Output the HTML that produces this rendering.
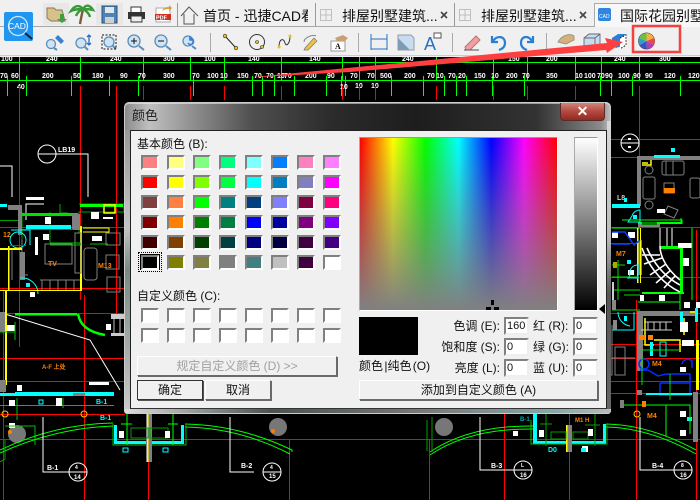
<!DOCTYPE html>
<html><head><meta charset="utf-8"><style>
html,body{margin:0;padding:0;background:#000;}
#p{position:relative;width:700px;height:500px;overflow:hidden;background:#000;font-family:"Liberation Sans","WenQuanYi Zen Hei","Noto Sans CJK SC",sans-serif;}
#p>*{position:absolute;}
.t{white-space:nowrap;font-size:14px;color:#111;line-height:16px;}
.l{white-space:nowrap;font-size:12px;color:#111;line-height:14px;}
.s{position:absolute;width:14px;height:11px;border:2px solid;border-color:#808080 #fff #fff #808080;box-sizing:content-box;}
.b{box-sizing:border-box;background:#f0f0f0;border:1px solid;border-color:#fff #696969 #696969 #fff;box-shadow:1px 1px 0 #696969;text-align:center;font-size:12px;line-height:18px;color:#111;white-space:nowrap;}
.i{box-sizing:border-box;background:#fff;border:2px solid;border-color:#808080 #eee #eee #808080;font-size:11px;line-height:14px;height:18px;width:25px;color:#111;padding-left:1px;}
</style></head><body><div id="p">

<svg style="left:0;top:0" width="700" height="500" viewBox="0 0 700 500" font-family="Liberation Sans,sans-serif" font-weight="bold" font-size="7" fill="#fff">
<rect width="700" height="500" fill="#000"/>
<!-- ruler -->
<g stroke="#00ff00" stroke-width="1" fill="none">
<path d="M0 62.5H700M0 80.5H700"/>
<path d="M19.5 57V80M80.5 57V80M143.5 57V80M190.5 57V80M224.5 57V80M281.5 57V80M342.5 57V80M359.5 57V80M375.5 57V80M436.5 57V80M493.5 57V80M527.5 57V80M575.5 57V80M601.5 57V80M639.5 57V80"/>
<path d="M7.5 76V96M26.5 76V96M71.5 76V96M109.5 76V96M138.5 76V96M193.5 76V96M252.5 76V96M262.5 76V96M274.5 76V96M294.5 76V96M326.5 76V96M341.5 76V96M345.5 76V96M391.5 76V96M423.5 76V96M444.5 76V96M456.5 76V96M466.5 76V96M492.5 76V96M524.5 76V96M600.5 76V96M611.5 76V96M632.5 76V96M680.5 76V96"/>
</g>
<g>
<text x="1" y="61">100</text><text x="46" y="61">240</text><text x="110" y="61">240</text><text x="163" y="61">300</text><text x="204" y="61">100</text><text x="248" y="61">140</text><text x="309" y="61">140</text><text x="402" y="61">240</text><text x="508" y="61">150</text><text x="546" y="61">200</text><text x="614" y="61">240</text><text x="659" y="61">300</text>
<text x="0" y="78">70</text><text x="11" y="78">60</text><text x="42" y="78">200</text><text x="73" y="78">50</text><text x="92" y="78">180</text><text x="120" y="78">90</text><text x="138" y="78">70</text><text x="163" y="78">300</text><text x="192" y="78">70</text><text x="207" y="78">100</text><text x="220" y="78">10</text><text x="237" y="78">150</text><text x="254" y="78">70</text><text x="266" y="78">70</text><text x="277" y="78">10</text><text x="284" y="78">70</text><text x="305" y="78">200</text><text x="327" y="78">90</text><text x="350" y="78">70</text><text x="367" y="78">70</text><text x="380" y="78">500</text><text x="404" y="78">200</text><text x="427" y="78">70</text><text x="436" y="78">10</text><text x="448" y="78">70</text><text x="458" y="78">20</text><text x="474" y="78">150</text><text x="491" y="78">10</text><text x="506" y="78">200</text><text x="522" y="78">70</text><text x="546" y="78">350</text><text x="575" y="78">10</text><text x="584" y="78">100</text><text x="597" y="78">70</text><text x="605" y="78">90</text><text x="618" y="78">100</text><text x="633" y="78">90</text><text x="645" y="78">90</text><text x="664" y="78">120</text><text x="688" y="78">120</text>
<text x="17" y="89">40</text><text x="340" y="89">10</text><text x="355" y="88">10</text><text x="371" y="88">10</text>
</g>

<!-- red lines -->
<g stroke="#ff0000" stroke-width="1" fill="none">
<path d="M19.5 86V347M80.5 86V300M116.5 86V313M143.5 86V100M190.5 86V100M224.5 86V100M281.5 86V100M342.5 86V100M359.5 86V100M375.5 86V100M436.5 86V100M493.5 86V100M527.5 86V100M575.5 86V100M639.5 86V206"/>
<path d="M3.5 290V500M84.5 295V500M148.5 414V500M289.5 439V500M429.5 439V500M504.5 414V500M569.5 414V500M636.5 300V500M696.5 230V500"/>
<path d="M0 227.5H125M0 288.5H125M0 313.5H125M0 358.5H125M0 381.5H125M0 414.5H125M0 439.5H700M611 139.5H700M611 157.5H660M611 227.5H700M611 243.5H640M611 277.5H700M611 313.5H700M611 344.5H700M611 358.5H700M611 381.5H700M611 393.5H700"/>
</g>

<!-- left plan -->
<circle cx="47" cy="154" r="9" fill="none" stroke="#fff"/><path d="M38 154H88V197M0 166H12V197" stroke="#fff" fill="none"/>
<path d="M26 220V204H44" stroke="#fff" fill="none"/>
<text x="58" y="152" font-size="7">LB19</text>
<rect x="26" y="197" width="18" height="3"/>
<path d="M60 204V213H68" stroke="#0a0" fill="none" stroke-width="1"/>
<path d="M79 204H124V212H79V233M50 212V243M22 212V245" stroke="#00a000" fill="none"/>
<rect x="22" y="213" width="56" height="3" fill="#00e000"/><rect x="80" y="204" width="43" height="3" fill="#00ff00"/>
<rect x="8" y="205" width="14" height="5" fill="#808080"/><rect x="18" y="205" width="4" height="30" fill="#808080"/><rect x="72" y="214" width="8" height="16" fill="#808080"/>
<rect x="0" y="204" width="7" height="3" fill="#00ffff"/>
<rect x="26" y="225" width="45" height="5" fill="#00ffff"/><rect x="0" y="220" width="18" height="1" fill="#00a000"/>
<rect x="23" y="229" width="50" height="1" fill="#f00"/><path d="M0 227.5H18" stroke="#f00"/>
<path d="M83 228H109V232H83" stroke="#ffff00" fill="none"/><rect x="80" y="226" width="2" height="65" fill="#ffff00"/>
<rect x="104" y="205" width="11" height="8" fill="none" stroke="#ffff00" stroke-width="1.5"/>
<rect x="45" y="217" width="6" height="7"/><rect x="91" y="212" width="8" height="7"/><rect x="103" y="217" width="10" height="2"/><rect x="43" y="234" width="6" height="6"/><rect x="92" y="236" width="10" height="5"/>
<rect x="35" y="237" width="3" height="18"/>
<g stroke="#808080" fill="none" stroke-width="1"><rect x="45" y="244" width="27" height="20"/><rect x="75" y="233" width="6" height="40"/><rect x="84" y="248" width="13" height="32" rx="3"/><rect x="106" y="233" width="14" height="12"/><rect x="106" y="255" width="13" height="14"/><rect x="107" y="277" width="13" height="15"/><path d="M40 280H80M42 280V290M50 280V290M58 280V290M66 280V290M74 280V290M22 240V275H28M12 250V280"/></g>
<path d="M50 243H80V245H50M90 244H108" stroke="#00c000" fill="none"/>
<text x="48" y="266" fill="#ff8000">TV</text><text x="98" y="268" fill="#ff8000">M13</text><text x="3" y="237" fill="#ff8000">12</text>
<circle cx="18" cy="240" r="8" fill="none" stroke="#00ffff"/><path d="M11 230H30V245" stroke="#00ffff" fill="none"/>
<rect x="0" y="248" width="22" height="2" fill="#ffff00"/><rect x="10" y="245" width="16" height="1" fill="#f00"/><rect x="8" y="246" width="1.5" height="45" fill="#ffff00"/><rect x="20" y="252" width="5" height="28" fill="#808080"/>
<path d="M20 278a16 16 0 0 1 18 16" stroke="#00ffff" fill="none"/><rect x="26" y="283" width="4" height="4" fill="#0ff"/>
<rect x="0" y="290" width="40" height="1" fill="#ff0"/><rect x="37" y="290" width="45" height="1" fill="#ff0"/><rect x="30" y="292" width="5" height="5"/>
<!-- left lower -->
<rect x="15" y="313" width="62" height="2.5" fill="#00ff00"/>
<path d="M78 314C80 325 88 332 105 335" stroke="#00ff00" stroke-width="2.5" fill="none"/>
<path d="M5 314L90 340L120 390" stroke="#fff" fill="none"/>
<rect x="111" y="314" width="13" height="5" fill="#ccc"/><rect x="111" y="333" width="13" height="3" fill="#ccc"/><path d="M114 319V333M120 319V333" stroke="#bbb"/>
<rect x="106" y="324" width="5" height="6"/>
<rect x="0" y="312" width="5" height="20" fill="#808080"/><rect x="5" y="290" width="2" height="95" fill="#ffff00"/>
<rect x="7" y="325" width="8" height="6"/><path d="M0 332H15V340M15 322V332" stroke="#00c000" fill="none"/>
<rect x="0" y="380" width="6" height="12" fill="#808080"/>
<rect x="15" y="392" width="99" height="4" fill="#00ffff"/><rect x="0" y="393" width="15" height="3" fill="#00ffff"/><rect x="73" y="393" width="12" height="3" fill="#808080"/>
<rect x="89" y="382" width="20" height="3" fill="#fff"/>
<rect x="17" y="385" width="5" height="6"/>
<path d="M0 405.5H114M17 398V420M63 398V408" stroke="#00c000" fill="none"/>
<rect x="9" y="400" width="6" height="6"/><rect x="39" y="400" width="4" height="4" fill="none" stroke="#0ff"/><rect x="56" y="398" width="6" height="8"/>
<text x="96" y="404" fill="#00ffff">B-1</text><text x="100" y="420" fill="#00ffff">B-1</text>
<text x="42" y="369" fill="#ff8000" font-size="6">A-F 上处</text>
<circle cx="5" cy="414" r="3" fill="none" stroke="#ffcc00"/><circle cx="84" cy="414" r="3" fill="none" stroke="#ffcc00"/>
<g fill="#777"><circle cx="17" cy="434" r="9"/><circle cx="278" cy="427" r="9"/><circle cx="444" cy="427" r="9"/></g>
<circle cx="10" cy="432" r="2" fill="#ff8000"/><circle cx="273" cy="431" r="2" fill="#ff8000"/>
<rect x="9" y="423" width="6" height="5"/>
<path d="M5 426H35V445" stroke="#00c000" fill="none"/>
<!-- arcs -->
<g stroke="#00ff00" fill="none">
<path d="M0 453Q55 428 113 426M0 450Q55 424 113 423"/>
<path d="M185 424Q240 425 292 450L292 452M185 427Q240 428 290 454"/>
<path d="M430 452Q470 425 535 426M430 455Q470 428 535 429"/>
<path d="M606 424Q650 425 696 450M606 427Q650 428 696 454"/>
</g>
<path d="M0 462L5 459V440M427 451V420M432 452V417" stroke="#00a000" fill="none"/>
<path d="M113 424V445H186V425" stroke="#00c000" fill="none"/>
<rect x="114" y="425" width="3" height="18" fill="#00ffff"/><rect x="181" y="425" width="3" height="18" fill="#00ffff"/><rect x="114" y="441" width="70" height="3" fill="#00ffff"/>
<rect x="146" y="414" width="6" height="48" fill="#808080"/><rect x="147" y="414" width="1.5" height="48" fill="#ff0"/>
<path d="M131 428H148V438H131ZM150 428H168V438H150Z" stroke="#00a000" fill="none"/>
<path d="M127 414V445M173 414V445M121 424H132M168 424H178" stroke="#00ff00" fill="none"/>
<rect x="119" y="431" width="5" height="7"/><rect x="165" y="431" width="5" height="7"/>
<rect x="123" y="448" width="5" height="4" fill="none" stroke="#0ff"/><rect x="163" y="448" width="5" height="4" fill="none" stroke="#0ff"/>
<!-- bottom -->
<g stroke="#fff" fill="none"><path d="M43 417V472H70"/><circle cx="78" cy="472" r="9"/><path d="M69 472H87"/>
<path d="M230 417V472H254"/><circle cx="272" cy="472" r="9"/><path d="M263 472H281"/>
<path d="M480 417V470H514"/><circle cx="523" cy="470" r="9"/><path d="M514 470H532"/>
<path d="M640 417V470H675"/><circle cx="683" cy="470" r="9"/><path d="M674 470H692"/></g>
<text x="47" y="470">B-1</text><text x="241" y="468">B-2</text><text x="491" y="468">B-3</text><text x="652" y="468">B-4</text>
<text x="75" y="469" font-size="5">4</text><text x="74" y="479" font-size="6">14</text><text x="270" y="469" font-size="5">4</text><text x="269" y="478" font-size="6">15</text><text x="521" y="467" font-size="5">L</text><text x="520" y="477" font-size="6">16</text><text x="681" y="467" font-size="5">8</text><text x="680" y="477" font-size="6">16</text>
<!-- center bottom right -->
<rect x="533" y="414" width="4" height="27" fill="#00ffff"/><rect x="603" y="424" width="3" height="17" fill="#00ffff"/><rect x="533" y="441" width="73" height="3" fill="#00ffff"/>
<path d="M531 420V444H607V424" stroke="#00c000" fill="none"/>
<rect x="566" y="425" width="6" height="27" fill="#808080"/><rect x="566" y="425" width="1.5" height="27" fill="#ff0"/>
<path d="M551 432H566V439H551ZM573 432H588V439H573ZM546 414V446M595 414V446M540 424H552M585 425H600" stroke="#00a000" fill="none"/>
<rect x="539" y="430" width="5" height="7"/><rect x="588" y="429" width="5" height="7"/><rect x="513" y="431" width="5" height="5"/><rect x="582" y="446" width="6" height="6"/>
<text x="548" y="452" fill="#0ff">D0</text><rect x="581" y="448" width="5" height="4" fill="#0ff"/>
<text x="575" y="422" fill="#ff8000" font-size="6">M1 H</text><text x="520" y="421" fill="#0aa" font-size="6">B-1</text>
<!-- right side lower -->
<text x="647" y="418" fill="#ff8000">M4</text><circle cx="637" cy="414" r="3" fill="none" stroke="#ffcc00"/>
<rect x="680" y="411" width="6" height="6"/><rect x="680" y="430" width="6" height="6"/><rect x="687" y="417" width="5" height="4" fill="#0ff"/>
<path d="M624 405H690V434M666 405V436" stroke="#00ff00" fill="none"/>
<rect x="642" y="401" width="4" height="6" fill="#ff8000"/><rect x="620" y="400" width="4" height="8" fill="#808080"/><rect x="693" y="392" width="5" height="50" fill="#808080"/>
<!-- right plan -->
<circle cx="630" cy="143" r="9" fill="none" stroke="#fff"/><path d="M621 143H639" stroke="#fff"/><rect x="628" y="138" width="3" height="2"/><rect x="628" y="146" width="3" height="2"/>
<rect x="654" y="155" width="26" height="3" fill="#00ffff"/><rect x="640" y="156" width="60" height="4" fill="#808080"/><rect x="654" y="155" width="26" height="3" fill="#00ffff"/>
<rect x="671" y="148" width="4" height="4" fill="#00ffff"/>
<rect x="637" y="156" width="4" height="50" fill="#808080"/>
<path d="M642 165H651V160M642 163H648" stroke="#ffff00" fill="none" stroke-width="1.5"/>
<g stroke="#808080" fill="none"><circle cx="649" cy="170" r="4"/><rect x="643" y="177" width="12" height="22" rx="2"/><circle cx="649" cy="205" r="4"/><rect x="662" y="161" width="22" height="14" rx="2"/><path d="M666 161V175M673 161V175"/><rect x="664" y="183" width="10" height="10"/><path d="M668 206L678 210L674 218L664 214Z"/><rect x="690" y="178" width="10" height="20" rx="2"/></g>
<rect x="664" y="188" width="11" height="5" fill="#ff8000"/>
<rect x="657" y="209" width="8" height="4"/><text x="617" y="200" fill="#ccc" font-size="7">L8</text><rect x="624" y="198" width="3" height="4" fill="#0ff"/>
<rect x="612" y="204" width="28" height="4" fill="#00ffff"/>
<rect x="638" y="222" width="44" height="2" fill="#00ff00"/><rect x="638" y="224" width="22" height="3" fill="#808080"/><path d="M612 228H640M622 220H682V224M681 218V224" stroke="#00ff00" fill="none"/>
<rect x="642" y="222" width="15" height="3" fill="#008000"/>
<path d="M632 216a8 8 0 0 1 8 -6V222H628Z" fill="none" stroke="#0ff"/><rect x="633" y="215" width="4" height="4" fill="#0ff"/>
<rect x="612" y="232" width="6" height="6"/><rect x="628" y="232" width="7" height="6"/>
<rect x="638" y="240" width="4" height="35" fill="#808080"/><rect x="637" y="228" width="1.5" height="55" fill="#ff0"/><rect x="640" y="228" width="1" height="55" fill="#ff0"/>
<rect x="661" y="246" width="22" height="3" fill="#00ff00"/><rect x="680" y="246" width="3" height="46" fill="#00ff00"/><rect x="642" y="292" width="42" height="2" fill="#00ff00"/>
<path d="M642 248C650 270 665 285 680 292M647 248C655 266 667 278 680 285M660 246C660 258 668 270 680 280M642 255H660M644 264L662 258M650 275L666 264M656 283L671 270M664 288L675 276" stroke="#fff" fill="none" stroke-width="1.6"/>
<path d="M660 228V246M667 228V246M672 228V246" stroke="#fff" fill="none"/>
<rect x="678" y="243" width="14" height="5"/><rect x="683" y="258" width="6" height="8"/><rect x="640" y="295" width="4" height="6"/><rect x="659" y="295" width="6" height="6"/><rect x="684" y="302" width="6" height="6"/><rect x="696" y="302" width="4" height="6"/><rect x="628" y="270" width="6" height="5"/>
<path d="M638 302H680V310M692 228V300M680 294V302" stroke="#00ff00" fill="none"/>
<path d="M612 232H625L634 245L640 240M612 244H630" stroke="#0040ff" fill="none" stroke-width="1.5"/>
<text x="616" y="256" fill="#ff8000">M7</text>
<path d="M630 275a8 8 0 0 1 8 -10V278H628Z" fill="none" stroke="#0ff"/><rect x="627" y="260" width="4" height="4" fill="#0ff"/>
<path d="M612 265H625M612 277H638M612 290H640M618 260V300M624 295H640M612 310H640" stroke="#00e000" fill="none"/>
<rect x="612" y="282" width="2" height="20" fill="#ccc"/><rect x="613" y="262" width="4" height="6" fill="#aa0"/><rect x="612" y="300" width="4" height="10" fill="#888"/>
<rect x="637" y="311" width="6" height="60" fill="#808080"/><rect x="637" y="311" width="60" height="5" fill="#808080"/>
<path d="M645 318V345H654M654 340H680V352M684 318V335M690 312H697" stroke="#ffff00" fill="none" stroke-width="1.5"/>
<path d="M644 322H672M648 322V330M654 322V330M660 322V330M666 322V330M641 330H672" stroke="#ccc" fill="none"/>
<path d="M634 312V330H612M618 312a14 14 0 0 0 12 14" fill="none" stroke="#0ff"/><rect x="624" y="316" width="3" height="5" fill="#0ff"/>
<rect x="613" y="320" width="4" height="10" fill="#888"/>
<rect x="639" y="335" width="6" height="5" fill="#ff8000"/><rect x="648" y="335" width="5" height="5" fill="#ff8000"/>
<path d="M612 325V375H600M615 347H625V375H615ZM612 358H635" stroke="#808080" fill="none"/>
<rect x="680" y="312" width="3" height="12" fill="#0ff"/><rect x="695" y="308" width="3" height="14" fill="#0ff"/>
<rect x="650" y="342" width="3" height="14" fill="#0ff"/><rect x="660" y="342" width="6" height="14" fill="none" stroke="#0ff"/>
<rect x="682" y="340" width="12" height="6"/><rect x="680" y="322" width="8" height="10"/>
<circle cx="644" cy="364" r="5" fill="none" stroke="#0030ff" stroke-width="1.5"/>
<path d="M640 370H648L658 376L666 374H690V395H660V383M660 383H690M682 364a6 6 0 0 1 10 -3V368" stroke="#0030ff" fill="none" stroke-width="1.5"/>
<text x="652" y="366" fill="#ff8000">M4</text>
<rect x="680" y="367" width="6" height="5"/>
<rect x="637" y="390" width="5" height="5" fill="#808080"/><rect x="646" y="393" width="46" height="2" fill="#0ff"/>
<path d="M642 350H680M642 355V385M670 374V400" stroke="#0d0" fill="none"/>
<rect x="696" y="340" width="3" height="50" fill="#ff0"/>
</svg>

<!-- dialog frame -->
<div style="left:124px;top:102px;width:487px;height:312px;box-sizing:border-box;border:1px solid #ccc;border-radius:5px 5px 3px 3px;background:linear-gradient(90deg,#8c8c8c 0,#c0c0c0 5%,#8f8f8f 14%,#505050 26%,#2c2c2c 42%,#1d1d1d 60%,#333 85%,#8a8a8a 98%,#bbb 100%);box-shadow:inset 0 1px 0 rgba(255,255,255,.5);"></div>
<div style="left:125px;top:130px;width:5px;height:279px;background:linear-gradient(#999,#c4c4c4 35%,#7a8a80 50%,#c8c8c8 100%);"></div>
<div style="left:607px;top:121px;width:4px;height:288px;background:linear-gradient(#d9d9d9,#bbb 40%,#555 60%,#666 100%);"></div>
<div style="left:125px;top:409px;width:485px;height:4px;background:linear-gradient(90deg,#ddd,#4a5550 30%,#777 60%,#8aa 90%,#bbb);"></div>
<div class="t" style="left:132px;top:108px;color:#222;font-size:13px;">颜色</div>
<div style="left:560px;top:103px;width:45px;height:18px;box-sizing:border-box;border:1px solid #5a2a2a;border-top:0;border-radius:0 0 4px 4px;background:linear-gradient(#d0867a,#b5483e 50%,#8e2b22);color:#fff;font:bold 14px/16px 'Liberation Sans',sans-serif;text-align:center;">✕</div>

<!-- client -->
<div style="left:130px;top:130px;width:477px;height:279px;box-sizing:border-box;background:#f0f0f0;border:1px solid #222;border-bottom:1px solid #333;"></div>

<div class="l" style="left:137px;top:137px;">基本颜色 (B):</div>

<!-- swatches -->
<div style="left:0;top:0;width:0;height:0;">
<div class="s" style="left:141px;top:155px;background:#ff8080"></div><div class="s" style="left:167px;top:155px;background:#ffff80"></div><div class="s" style="left:193px;top:155px;background:#80ff80"></div><div class="s" style="left:219px;top:155px;background:#00ff80"></div><div class="s" style="left:245px;top:155px;background:#80ffff"></div><div class="s" style="left:271px;top:155px;background:#0080ff"></div><div class="s" style="left:297px;top:155px;background:#ff80c0"></div><div class="s" style="left:323px;top:155px;background:#ff80ff"></div>
<div class="s" style="left:141px;top:175px;background:#ff0000"></div><div class="s" style="left:167px;top:175px;background:#ffff00"></div><div class="s" style="left:193px;top:175px;background:#80ff00"></div><div class="s" style="left:219px;top:175px;background:#00ff40"></div><div class="s" style="left:245px;top:175px;background:#00ffff"></div><div class="s" style="left:271px;top:175px;background:#0080c0"></div><div class="s" style="left:297px;top:175px;background:#8080c0"></div><div class="s" style="left:323px;top:175px;background:#ff00ff"></div>
<div class="s" style="left:141px;top:195px;background:#804040"></div><div class="s" style="left:167px;top:195px;background:#ff8040"></div><div class="s" style="left:193px;top:195px;background:#00ff00"></div><div class="s" style="left:219px;top:195px;background:#008080"></div><div class="s" style="left:245px;top:195px;background:#004080"></div><div class="s" style="left:271px;top:195px;background:#8080ff"></div><div class="s" style="left:297px;top:195px;background:#800040"></div><div class="s" style="left:323px;top:195px;background:#ff0080"></div>
<div class="s" style="left:141px;top:215px;background:#800000"></div><div class="s" style="left:167px;top:215px;background:#ff8000"></div><div class="s" style="left:193px;top:215px;background:#008000"></div><div class="s" style="left:219px;top:215px;background:#008040"></div><div class="s" style="left:245px;top:215px;background:#0000ff"></div><div class="s" style="left:271px;top:215px;background:#0000a0"></div><div class="s" style="left:297px;top:215px;background:#800080"></div><div class="s" style="left:323px;top:215px;background:#8000ff"></div>
<div class="s" style="left:141px;top:235px;background:#400000"></div><div class="s" style="left:167px;top:235px;background:#804000"></div><div class="s" style="left:193px;top:235px;background:#004000"></div><div class="s" style="left:219px;top:235px;background:#004040"></div><div class="s" style="left:245px;top:235px;background:#000080"></div><div class="s" style="left:271px;top:235px;background:#000040"></div><div class="s" style="left:297px;top:235px;background:#400040"></div><div class="s" style="left:323px;top:235px;background:#400080"></div>
<div style="position:absolute;left:138px;top:252px;width:24px;height:20px;box-sizing:border-box;border:1px dotted #000;"></div><div style="position:absolute;left:140px;top:254px;width:20px;height:16px;box-sizing:border-box;border:1px solid #000;"></div>
<div class="s" style="left:141px;top:255px;background:#000"></div><div class="s" style="left:167px;top:255px;background:#808000"></div><div class="s" style="left:193px;top:255px;background:#808040"></div><div class="s" style="left:219px;top:255px;background:#808080"></div><div class="s" style="left:245px;top:255px;background:#408080"></div><div class="s" style="left:271px;top:255px;background:#c0c0c0"></div><div class="s" style="left:297px;top:255px;background:#400040"></div><div class="s" style="left:323px;top:255px;background:#ffffff"></div>
<div class="s" style="left:141px;top:308px;background:#fff"></div><div class="s" style="left:167px;top:308px;background:#fff"></div><div class="s" style="left:193px;top:308px;background:#fff"></div><div class="s" style="left:219px;top:308px;background:#fff"></div><div class="s" style="left:245px;top:308px;background:#fff"></div><div class="s" style="left:271px;top:308px;background:#fff"></div><div class="s" style="left:297px;top:308px;background:#fff"></div><div class="s" style="left:323px;top:308px;background:#fff"></div>
<div class="s" style="left:141px;top:328px;background:#fff"></div><div class="s" style="left:167px;top:328px;background:#fff"></div><div class="s" style="left:193px;top:328px;background:#fff"></div><div class="s" style="left:219px;top:328px;background:#fff"></div><div class="s" style="left:245px;top:328px;background:#fff"></div><div class="s" style="left:271px;top:328px;background:#fff"></div><div class="s" style="left:297px;top:328px;background:#fff"></div><div class="s" style="left:323px;top:328px;background:#fff"></div>
</div>

<div class="l" style="left:137px;top:289px;">自定义颜色 (C):</div>
<div class="b" style="left:137px;top:356px;width:200px;height:20px;color:#a0a0a0;">规定自定义颜色 (D) &gt;&gt;</div>
<div class="b" style="left:137px;top:380px;width:66px;height:20px;border:1px solid #333;box-shadow:1px 1px 0 #555;">确定</div>
<div class="b" style="left:205px;top:380px;width:66px;height:20px;">取消</div>

<!-- spectrum -->
<div style="left:359px;top:137px;width:199px;height:174px;box-sizing:border-box;border:1px solid;border-color:#999 #fff #fff #aaa;background:linear-gradient(rgba(128,128,128,0),#808080),linear-gradient(90deg,#f00,#ff0 16.7%,#0f0 33.3%,#0ff 50%,#00f 66.7%,#f0f 83.3%,#f00);"></div>
<div style="left:574px;top:137px;width:24px;height:174px;box-sizing:border-box;border:1px solid;border-color:#999 #fff #fff #aaa;background:linear-gradient(#fff,#000);"></div>
<svg style="left:480px;top:296px" width="130" height="20"><path d="M119 13L125 8V18Z" fill="#000"/><rect x="11" y="4" width="3" height="5" fill="#000"/><rect x="6" y="11" width="5" height="3" fill="#000"/><rect x="14" y="11" width="5" height="3" fill="#000"/></svg>
<div style="left:359px;top:317px;width:59px;height:38px;background:#000;"></div>
<div class="l" style="left:359px;top:359px;word-spacing:-2px;">颜色 |纯色 (O)</div>

<div class="l" style="left:430px;top:319px;width:70px;text-align:right;">色调 (E):</div>
<div class="l" style="left:430px;top:340px;width:70px;text-align:right;">饱和度 (S):</div>
<div class="l" style="left:430px;top:361px;width:70px;text-align:right;">亮度 (L):</div>
<div class="l" style="left:533px;top:319px;">红 (R):</div>
<div class="l" style="left:533px;top:340px;">绿 (G):</div>
<div class="l" style="left:533px;top:361px;">蓝 (U):</div>
<div class="i" style="left:504px;top:317px;">160</div><div class="i" style="left:504px;top:338px;">0</div><div class="i" style="left:504px;top:359px;">0</div>
<div class="i" style="left:573px;top:317px;">0</div><div class="i" style="left:573px;top:338px;">0</div><div class="i" style="left:573px;top:359px;">0</div>
<div class="b" style="left:359px;top:380px;width:239px;height:20px;">添加到自定义颜色 (A)</div>

<!-- app header -->
<div style="left:0;top:0;width:700px;height:57px;background:#f0f0f0;"></div>
<div style="left:0;top:26px;width:594px;height:1px;background:#a8a8a8;"></div>
<div style="left:594px;top:3px;width:106px;height:24px;background:#f7f7f7;border-left:1px solid #aaa;border-top:1px solid #aaa;box-sizing:border-box;"></div>
<div style="left:0;top:55px;width:700px;height:1px;background:#ccc;"></div>
<div style="left:43px;top:3px;width:26px;height:22px;background:#e7e7e7;"></div><div style="left:96px;top:3px;width:27px;height:22px;background:#e7e7e7;"></div>
<div style="left:177px;top:3px;width:1px;height:23px;background:#999;"></div>
<div style="left:315px;top:3px;width:1px;height:23px;background:#999;"></div>
<div style="left:454px;top:3px;width:1px;height:23px;background:#999;"></div>
<div style="left:210px;top:33px;width:1px;height:19px;background:#aaa;"></div><div style="left:358px;top:33px;width:1px;height:19px;background:#aaa;"></div><div style="left:452px;top:33px;width:1px;height:19px;background:#aaa;"></div><div style="left:546px;top:33px;width:1px;height:19px;background:#aaa;"></div>

<div class="t" style="left:203px;top:8px;width:105px;overflow:hidden;">首页 - 迅捷CAD看图</div>
<div class="t" style="left:342px;top:8px;">排屋别墅建筑...</div>
<div class="t" style="left:481px;top:8px;">排屋别墅建筑...</div>
<div class="t" style="left:620px;top:8px;">国际花园别墅</div>

<svg style="left:0;top:0" width="700" height="90" viewBox="0 0 700 90">
<!-- CAD logo -->
<rect x="4" y="12" width="29" height="29" rx="2" fill="#2196f0"/>
<circle cx="18" cy="26" r="9.5" fill="none" stroke="#cfe6fa" stroke-width="1.3"/><path d="M25 33L32 39" stroke="#123" stroke-width="2"/>
<text x="8" y="29" font-family="Liberation Sans,sans-serif" font-size="8.5" fill="#fff">CAD</text>
<!-- folder -->
<path d="M47 8H54L56 10H62L65 21H51L47 18Z" fill="#d8c08a" stroke="#8a7a50"/><path d="M57 19H60V14H64V19H67L62 23Z" fill="#3aa040"/>
<!-- palm -->
<path d="M80 24C81 18 82 14 83 9" stroke="#7a5a3a" stroke-width="2.4" fill="none"/><path d="M83 9C79 4 74 6 71 11C75 9 79 9 83 9C86 4 90 5 93 10C89 9 86 9 83 9C80 10 77 13 76 16M83 9C86 11 89 13 90 17" stroke="#3a9a3a" stroke-width="2.4" fill="none"/>
<!-- save -->
<rect x="102" y="6" width="15" height="17" fill="#4f82b5" stroke="#2a5078"/><rect x="105" y="7" width="9" height="6" fill="#dfe8f0"/><rect x="105" y="17" width="9" height="6" fill="#cfcfcf"/>
<!-- print -->
<rect x="131" y="7" width="10" height="6" fill="#fff" stroke="#333"/><rect x="128" y="12" width="17" height="7" fill="#333"/><rect x="131" y="16" width="11" height="6" fill="#eee" stroke="#333"/>
<!-- pdf -->
<rect x="156" y="8" width="14" height="14" fill="#fff" stroke="#aaa"/><rect x="155" y="14" width="16" height="6" fill="#d03020"/><text x="156" y="19.5" font-family="Liberation Sans,sans-serif" font-weight="bold" font-size="5.5" fill="#fff">PDF</text><path d="M162 11C164 7 167 7 169 7V5L172 8L169 11V9C167 9 165 9 162 11Z" fill="#d9a030"/>
<!-- home -->
<path d="M181 16L189 7L198 16M184 14V24H194V14" fill="none" stroke="#555" stroke-width="1"/>
<!-- grid tabs -->
<g fill="none" stroke="#c0c0c0"><path d="M320.5 9.5H331.5V20.5H320.5ZM320.5 15H331.5M326 9.5V20.5"/><path d="M459.5 9.5H470.5V20.5H459.5ZM459.5 15H470.5M465 9.5V20.5"/></g>
<rect x="598" y="8" width="13" height="13" rx="2" fill="#2f86e0"/><text x="599" y="18" font-family="Liberation Sans,sans-serif" font-size="5" fill="#fff">CAD</text>
<g stroke="#444" stroke-width="1.6"><path d="M441 12L447 18M447 12L441 18M580 12L586 18M586 12L580 18"/></g>
<!-- toolbar magnifiers -->
<g fill="#cfe3f5" stroke="#5a8db5" stroke-width="1.3">
<circle cx="51" cy="44" r="4.5"/><circle cx="81" cy="43" r="5"/><circle cx="109" cy="42" r="5"/><circle cx="134" cy="41" r="6"/><circle cx="161" cy="41" r="6"/><circle cx="188" cy="41" r="5"/>
</g>
<g stroke="#5a8db5" stroke-width="2"><path d="M54 48L57 50M85 47L88 50M113 46L116 49M139 46L144 50M166 46L171 50M192 46L196 49"/></g>
<path d="M55 38l3 -3 3 3 3 3 -3 3 -3 -3z" fill="#3a7fd0"/>
<path d="M87 37L89 35L91 37M87 43L89 45L91 43M89 36V44" stroke="#2a6fc0" fill="none" stroke-width="1.3"/>
<rect x="102" y="35" width="14" height="14" fill="none" stroke="#111" stroke-dasharray="2 1.5"/>
<path d="M131 41H137M134 38V44M158 41H164" stroke="#111" stroke-width="1"/>
<path d="M189 39a3 3 0 1 1 -1 4M190 36V40H194" fill="none" stroke="#3a7fd0" stroke-width="1.5"/>
<!-- draw tools -->
<path d="M225 36L236 48" stroke="#222"/><circle cx="225" cy="36" r="1.8" fill="#e8c020" stroke="#333" stroke-width=".6"/><circle cx="236" cy="48" r="1.8" fill="#e8c020" stroke="#333" stroke-width=".6"/>
<circle cx="257" cy="42" r="7.5" fill="none" stroke="#333"/><circle cx="257" cy="42" r="1.5" fill="#e8c020" stroke="#333" stroke-width=".6"/><circle cx="262" cy="47" r="1.5" fill="#e8c020" stroke="#333" stroke-width=".6"/>
<path d="M279 47C279 38 284 38 285 43C286 47 290 44 290 36" fill="none" stroke="#333"/><circle cx="279" cy="47" r="1.5" fill="#e8c020"/><circle cx="290" cy="36" r="1.5" fill="#e8c020"/>
<path d="M305 48L314 38L317 41L308 50L304 50Z" fill="#f0c040" stroke="#777" stroke-width=".7"/><path d="M304 42C304 38 312 34 316 36" fill="none" stroke="#888"/>
<rect x="331" y="41" width="14" height="10" fill="#fff" stroke="#999"/><text x="335" y="49" font-family="Liberation Serif,serif" font-weight="bold" font-size="8" fill="#111">A</text><path d="M335 38L343 35L348 38L345 41L337 41Z" fill="#c8a078"/>
<!-- dim etc -->
<path d="M371 34V50M387 34V50M371 39H387M371 49H387" stroke="#2a6fc0" fill="none"/>
<path d="M398 35H411L414 38V50H398Z" fill="#c8dcf0" stroke="#99a"/><path d="M398 50V38L410 50Z" fill="#7f9ab5"/>
<text x="424" y="50" font-family="Liberation Sans,sans-serif" font-size="18" fill="#2a6fc0">A</text><rect x="434" y="33" width="7" height="5" fill="#fff" stroke="#555"/>
<path d="M465 47L476 36L480 40L470 50H466Z" fill="#f0a0a0" stroke="#c07070"/><path d="M464 50H479" stroke="#555"/>
<path d="M492 36V42H498M493 41C497 35 505 36 505 43C505 47 502 49 499 50" fill="none" stroke="#2a7fd0" stroke-width="2.2"/>
<path d="M533 36V42H527M532 41C528 35 521 36 521 43C521 47 524 49 527 50" fill="none" stroke="#2a7fd0" stroke-width="2.2"/>
<path d="M558 42C562 35 570 33 574 36L574 40L566 44Z" fill="#d8b080" stroke="#997"/>
<path d="M584 38L589 34H600V44L595 49H584Z M584 38H595V49M595 38L600 34" fill="#c8dcf0" stroke="#667" stroke-width=".9"/>
<path d="M612 38L618 34H626L622 38Z" fill="#2a80d8"/><path d="M612 38H622V46L616 48L612 45Z" fill="#2a80d8"/>
<path d="M620 38L626 35V45L620 49" fill="#fff" stroke="#111" stroke-dasharray="1.5 1.5"/>
<!-- color wheel -->
<circle cx="646.5" cy="41" r="8" fill="#fff" stroke="#333" stroke-width=".8"/>
<path d="M646.5 41L646.5 33A8 8 0 0 1 654 38Z" fill="#f5b040"/><path d="M646.5 41L654 38A8 8 0 0 1 654 45Z" fill="#e84a4a"/><path d="M646.5 41L654 45A8 8 0 0 1 647 49Z" fill="#b040b0"/><path d="M646.5 41L647 49A8 8 0 0 1 639.5 45Z" fill="#4050c0"/><path d="M646.5 41L639.5 45A8 8 0 0 1 639 38Z" fill="#30a0d0"/><path d="M646.5 41L639 38A8 8 0 0 1 646.5 33Z" fill="#70c040"/>
<!-- red box + arrow overlay -->
<rect x="633" y="26" width="47" height="26" fill="none" stroke="#f44040" stroke-width="2.5"/>
<path d="M243 78L607 43L605 38L623 42L607 53L606 50L350 72Z" fill="#ff3f3f"/>
</svg>

</div></body></html>
